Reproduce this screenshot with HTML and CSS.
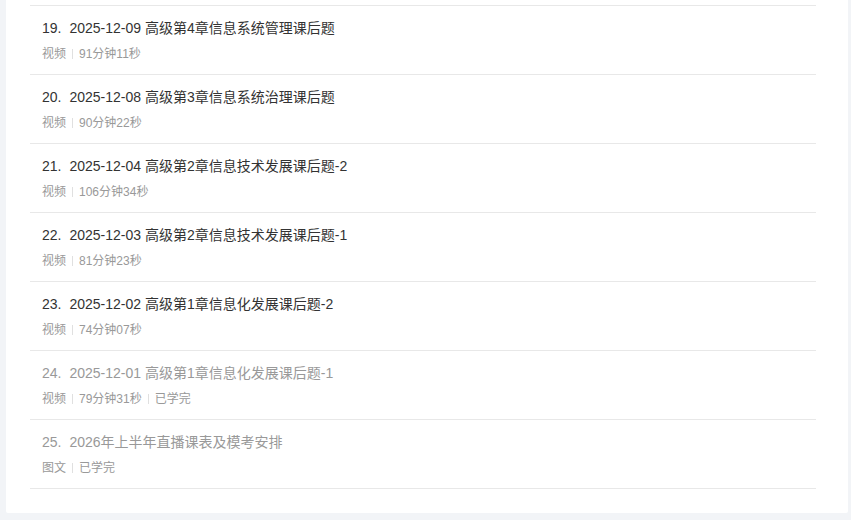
FILE: index.html
```html
<!DOCTYPE html>
<html>
<head>
	<meta charset="utf-8">
	<title>课程目录</title>
	<link rel="stylesheet" href="styles.css">
</head>
<body>
	<div class="card">
		<ul class="lessons">
			<li class="lesson">
				<div class="title"><span class="num">19.</span>2025-12-09 高级第4章信息系统管理课后题</div>
				<div class="meta"><span>视频</span><span>91分钟11秒</span></div>
			</li>
			<li class="lesson">
				<div class="title"><span class="num">20.</span>2025-12-08 高级第3章信息系统治理课后题</div>
				<div class="meta"><span>视频</span><span>90分钟22秒</span></div>
			</li>
			<li class="lesson">
				<div class="title"><span class="num">21.</span>2025-12-04 高级第2章信息技术发展课后题-2</div>
				<div class="meta"><span>视频</span><span>106分钟34秒</span></div>
			</li>
			<li class="lesson">
				<div class="title"><span class="num">22.</span>2025-12-03 高级第2章信息技术发展课后题-1</div>
				<div class="meta"><span>视频</span><span>81分钟23秒</span></div>
			</li>
			<li class="lesson">
				<div class="title"><span class="num">23.</span>2025-12-02 高级第1章信息化发展课后题-2</div>
				<div class="meta"><span>视频</span><span>74分钟07秒</span></div>
			</li>
			<li class="lesson done">
				<div class="title"><span class="num">24.</span>2025-12-01 高级第1章信息化发展课后题-1</div>
				<div class="meta"><span>视频</span><span>79分钟31秒</span><span>已学完</span></div>
			</li>
			<li class="lesson done">
				<div class="title"><span class="num">25.</span>2026年上半年直播课表及模考安排</div>
				<div class="meta"><span>图文</span><span>已学完</span></div>
			</li>
		</ul>
	</div>
</body>
</html>
```

FILE: styles.css
```css
body{
	margin: 0;
	padding: 0 3px 7px 6px;
	background: #f2f4f7;
	font-family: "Liberation Sans", "Noto Sans CJK SC", sans-serif;
	color: #333;
}

/* Card */
.card{
	background: #fff;
	padding: 5px 32px 24px 24px;
	border-radius: 0 0 2px 2px;
}

.lessons{
	list-style: none;
	margin: 0;
	padding: 0;
	border-top: 1px solid #e8e8e8;
}

.lesson{
	padding: 12px 12px 11px 12px;
	border-bottom: 1px solid #e8e8e8;
}

.title{
	font-size: 14px;
	line-height: 20px;
	color: #333;
}

.title .num{
	margin-right: 8px;
}

.meta{
	display: flex;
	align-items: center;
	margin-top: 7px;
	font-size: 12px;
	line-height: 18px;
	color: #999;
}

.meta span + span::before{
	content: "";
	display: inline-block;
	width: 1px;
	height: 10px;
	background: #e0e0e0;
	margin: 0 6px;
	vertical-align: -1px;
}

/* finished lessons */
.done .title{
	color: #999;
}
```
